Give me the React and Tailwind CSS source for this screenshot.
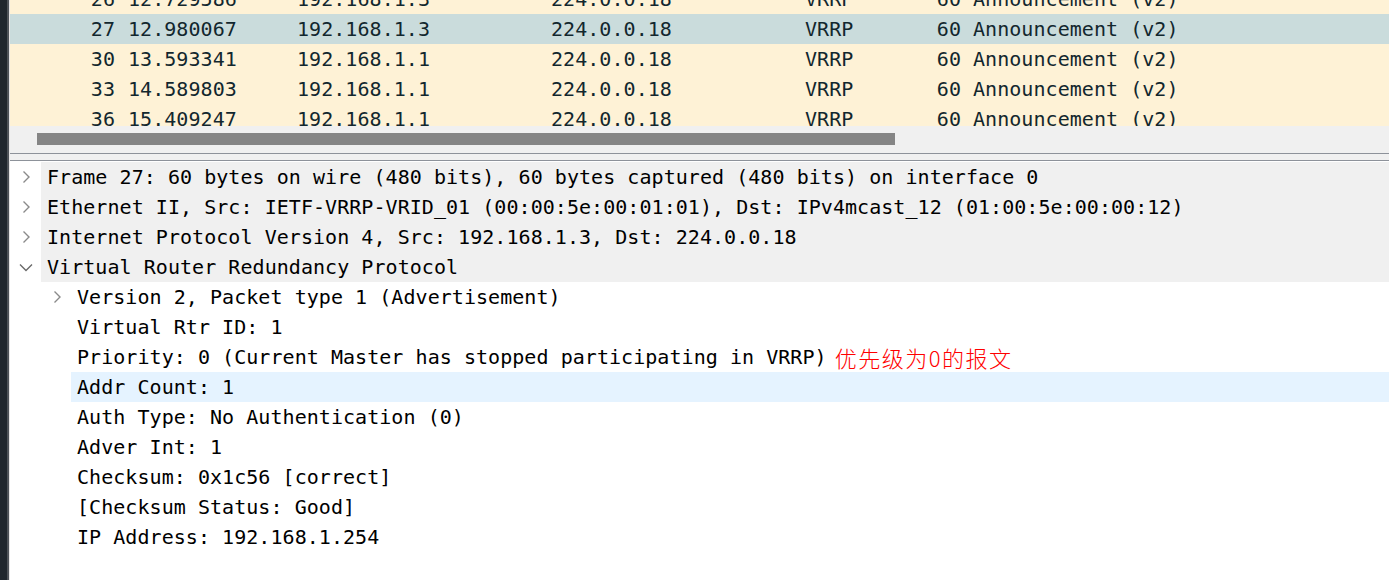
import React from 'react';

const rows = [
  { no: '26', time: '12.729586', src: '192.168.1.3', dst: '224.0.0.18', proto: 'VRRP', len: '60', info: 'Announcement (v2)' },
  { no: '27', time: '12.980067', src: '192.168.1.3', dst: '224.0.0.18', proto: 'VRRP', len: '60', info: 'Announcement (v2)', selected: true },
  { no: '30', time: '13.593341', src: '192.168.1.1', dst: '224.0.0.18', proto: 'VRRP', len: '60', info: 'Announcement (v2)' },
  { no: '33', time: '14.589803', src: '192.168.1.1', dst: '224.0.0.18', proto: 'VRRP', len: '60', info: 'Announcement (v2)' },
  { no: '36', time: '15.409247', src: '192.168.1.1', dst: '224.0.0.18', proto: 'VRRP', len: '60', info: 'Announcement (v2)' },
];

const tree = [
  { text: 'Frame 27: 60 bytes on wire (480 bits), 60 bytes captured (480 bits) on interface 0', level: 0, arrow: 'right' },
  { text: 'Ethernet II, Src: IETF-VRRP-VRID_01 (00:00:5e:00:01:01), Dst: IPv4mcast_12 (01:00:5e:00:00:12)', level: 0, arrow: 'right' },
  { text: 'Internet Protocol Version 4, Src: 192.168.1.3, Dst: 224.0.0.18', level: 0, arrow: 'right' },
  { text: 'Virtual Router Redundancy Protocol', level: 0, arrow: 'down' },
  { text: 'Version 2, Packet type 1 (Advertisement)', level: 1, arrow: 'right' },
  { text: 'Virtual Rtr ID: 1', level: 1 },
  { text: 'Priority: 0 (Current Master has stopped participating in VRRP)', level: 1, note: '优先级为0的报文' },
  { text: 'Addr Count: 1', level: 1, hover: true },
  { text: 'Auth Type: No Authentication (0)', level: 1 },
  { text: 'Adver Int: 1', level: 1 },
  { text: 'Checksum: 0x1c56 [correct]', level: 1 },
  { text: '[Checksum Status: Good]', level: 1 },
  { text: 'IP Address: 192.168.1.254', level: 1 },
];

const mono = { fontFamily: '"DejaVu Sans Mono", "Liberation Mono", monospace' };

const Chevron = ({ dir }) => (
  <svg width="16" height="16" viewBox="0 0 16 16" className="shrink-0">
    {dir === 'down' ? (
      <path d="M2 5.5 L8 11.5 L14 5.5" fill="none" stroke="#6a6a6a" strokeWidth="1.4" />
    ) : (
      <path d="M5.5 2.5 L11 8 L5.5 13.5" fill="none" stroke="#8a8a8a" strokeWidth="1.4" />
    )}
  </svg>
);

export default function App() {
  return (
    <div className="flex h-[580px] w-[1389px] overflow-hidden bg-white" style={mono}>
      <div className="w-[7px] shrink-0 bg-[#1f262d]" />
      <div className="w-[2px] shrink-0 bg-[#4d5258]" />
      <div className="w-px shrink-0 bg-[#e4e4e4]" />
      <div className="flex min-w-0 flex-1 flex-col">
        {/* packet list */}
        <div className="h-[126px] overflow-hidden bg-[#fef2d6] text-[20px] tracking-[0.05px] text-[#12272e]">
          <div className="-mt-[16px]">
            {rows.map((r) => (
              <div
                key={r.no}
                className={`flex h-[30px] items-center whitespace-pre leading-[30px] ${r.selected ? 'bg-[#cadcdc]' : ''}`}
              >
                <div className="w-[112px] shrink-0 pr-[7px] text-right">{r.no}</div>
                <div className="w-[169px] shrink-0 pl-[6px]">{r.time}</div>
                <div className="w-[254px] shrink-0 pl-[6px]">{r.src}</div>
                <div className="w-[254px] shrink-0 pl-[6px]">{r.dst}</div>
                <div className="w-[126px] shrink-0 pl-[6px]">{r.proto}</div>
                <div className="w-[42px] shrink-0 pr-[6px] text-right">{r.len}</div>
                <div className="pl-[6px]">{r.info}</div>
              </div>
            ))}
          </div>
        </div>
        {/* horizontal scrollbar */}
        <div className="flex h-[27px] items-start bg-[#f0f0f0] pt-[7px]">
          <div className="ml-[27px] h-[12px] w-[858px] bg-[#858585]" />
        </div>
        {/* splitter */}
        <div className="h-px bg-[#8d929a]" />
        <div className="h-[6px] bg-[#f0f0f0]" />
        <div className="h-px bg-[#8d929a]" />
        {/* packet details */}
        <div className="flex-1 pt-px text-[20px] tracking-[0.05px] text-black">
          {tree.map((t, i) => (
            <div key={i} className="flex h-[30px] items-center whitespace-pre leading-[30px]">
              <div className={`flex shrink-0 items-center justify-start ${t.level === 0 ? 'w-[31px] pl-[8px]' : 'w-[61px] pl-[39px]'}`}>
                {t.arrow && <Chevron dir={t.arrow} />}
              </div>
              <div
                className={`flex h-full flex-1 items-center pl-[6px] ${t.level === 0 ? 'bg-[#f0f0f0]' : ''} ${t.hover ? 'bg-[#e5f3ff]' : ''}`}
              >
                <span>{t.text}</span>
                {t.note && (
                  <span
                    className="ml-[8px] text-[22px] tracking-[1.5px] text-[#ff0000]"
                    style={{ fontFamily: '"Noto Sans CJK SC", sans-serif', fontWeight: 300 }}
                  >
                    {t.note}
                  </span>
                )}
              </div>
            </div>
          ))}
        </div>
      </div>
    </div>
  );
}
